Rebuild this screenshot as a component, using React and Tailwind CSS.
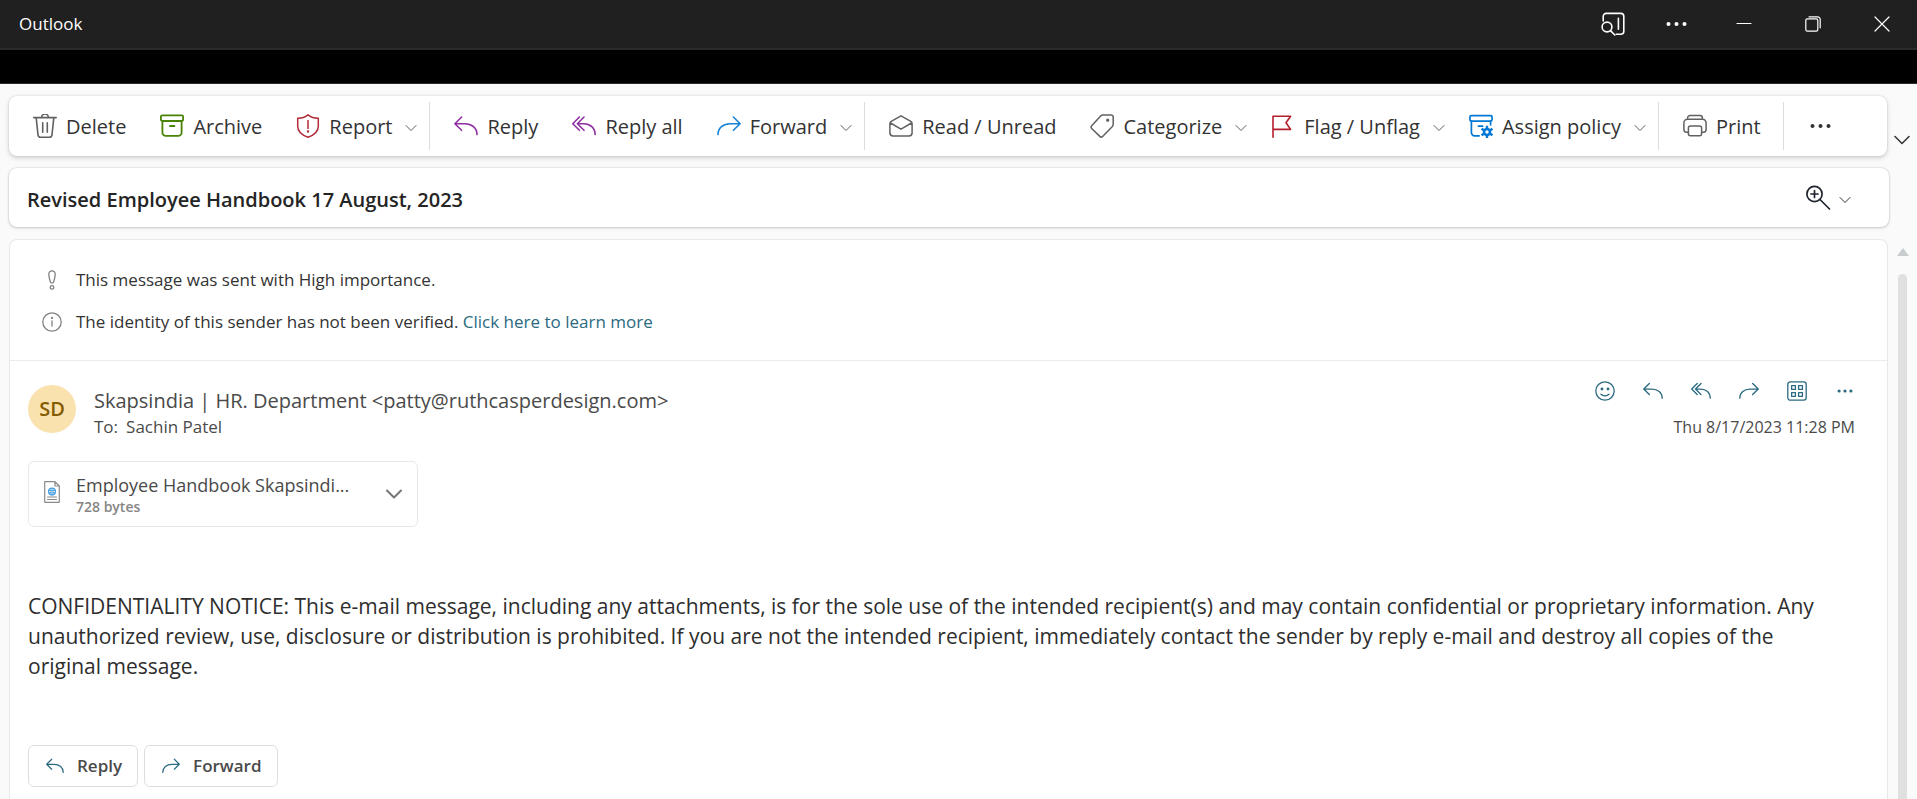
function Svg({ w = 24, h = 24, sw = 1.4, className = "", children }) {
  return (
    <svg
      width={w}
      height={h}
      viewBox={`0 0 ${w} ${h}`}
      fill="none"
      stroke="currentColor"
      strokeWidth={sw}
      strokeLinecap="round"
      strokeLinejoin="round"
      aria-hidden="true"
      className={`shrink-0 ${className}`}
    >
      {children}
    </svg>
  );
}

const DeleteIcon = () => (
  <Svg sw={1.6} className="text-[#616161]">
    <path d="M.8 3.6h22.4M8.6 3.4a3.4 3.4 0 0 1 6.8 0M3.2 3.8l1.8 17c.2 1.4 1.1 2.4 2.5 2.4h9c1.4 0 2.3-1 2.5-2.4l1.8-17M9.7 8.8v9.4M14.3 8.8v9.4" />
  </Svg>
);

const ArchiveIcon = () => (
  <Svg sw={1.8} className="text-[#498205]">
    <rect x=".9" y="1.4" width="22.2" height="5.6" rx="1.4" />
    <path d="M2.4 7v11.4a3.4 3.4 0 0 0 3.400 3.400h12.400a3.400 3.400 0 0 0 3.400-3.400V7M10 12h4.400" />
  </Svg>
);

const ShieldIcon = () => (
  <Svg sw={1.5} className="text-[#b02a37]">
    <path d="M12 .9c2.600 2.200 6 3.400 10.300 3.400v8c0 5-3.700 8.700-10.300 10.900C5.400 21 1.700 17.300 1.700 12.300v-8C6 4.300 9.400 3.100 12 .9zM12 6.600v7.800" />
    <circle cx="12" cy="17.600" r=".5" fill="currentColor" />
  </Svg>
);

const Arrow = ({ size = 24, className = "", d }) => (
  <svg
    width={size}
    height={size}
    viewBox="0 0 24 24"
    fill="none"
    stroke="currentColor"
    strokeWidth="1.6"
    strokeLinecap="round"
    strokeLinejoin="round"
    aria-hidden="true"
    className={`shrink-0 ${className}`}
  >
    <path d={d} />
  </svg>
);

const ReplyIcon = (props) => <Arrow {...props} d="M7.600 3L.9 9.700l6.700 6.600M1.200 9.700h9.600c7 0 12.200 4.300 12.200 10.900" />;

const ReplyAllIcon = (props) => (
  <Arrow {...props} d="M7.400 3L.8 9.700l6.600 6.600M12 3L5.400 9.700l6.600 6.600M5.600 9.700h6c6.600 0 11.500 4.300 11.500 10.900" />
);

const ForwardIcon = (props) => <Arrow {...props} d="M16.400 3l6.700 6.700-6.700 6.600M22.800 9.700h-9.600C6.200 9.700 1 14 1 20.600" />;

const MailReadIcon = () => (
  <Svg sw={1.5} className="text-[#616161]">
    <path d="M.9 9.600c0-1 .4-1.700 1.300-2.200L12 1.800l9.800 5.600c.9.500 1.300 1.200 1.300 2.200v9.200a3.200 3.200 0 0 1-3.200 3.200H4.100a3.200 3.200 0 0 1-3.200-3.200zM1.500 9L12 15.200 22.500 9" />
  </Svg>
);

const TagIcon = () => (
  <Svg sw={1.5} className="text-[#616161]">
    <path d="M13 .9h8a2.200 2.200 0 0 1 2.200 2.200v7.200c0 .8-.3 1.500-.8 2.100l-9.800 10c-.8.800-2 .8-2.800 0l-8.100-7.900c-.8-.8-.8-2 0-2.800L10.900 1.800c.6-.6 1.300-.9 2.100-.9z" />
    <circle cx="17.700" cy="6.200" r=".9" fill="currentColor" />
  </Svg>
);

const FlagIcon = () => (
  <Svg className="text-[#b3202c]" sw={1.600}>
    <path d="M2 23.200V2.200h17.600l-4.600 6.600 4.600 6.600H2" />
  </Svg>
);

const PolicyIcon = () => (
  <Svg sw={1.700} className="text-[#0078d4]">
    <rect x=".9" y="1.600" width="22.200" height="5.600" rx="1.600" />
    <path d="M2.400 7.200v11.400a3.200 3.200 0 0 0 3.200 3.200h4.600M21.600 7.200v3.600M9.400 12.200h4.200" />
    <circle cx="18" cy="18" r="3" strokeWidth="2.600" />
    <path strokeWidth="2.400" strokeLinecap="butt" d="M18 14.500v-2.700M18 21.500v2.500M21 16.300l2.500-1.500M15 19.700l-2.500 1.500M21 19.700l2.500 1.500M15 16.300l-2.500-1.500" />
  </Svg>
);

const PrinterIcon = () => (
  <Svg sw={1.5} className="text-[#616161]">
    <path d="M4.600 5.200V3.900a2.400 2.400 0 0 1 2.400-2.400h10a2.400 2.400 0 0 1 2.400 2.400v1.300M5.400 18.200H3.600A2.700 2.700 0 0 1 .9 15.500V8.700a3.500 3.500 0 0 1 3.500-3.500h15.200a3.500 3.500 0 0 1 3.500 3.500v6.800a2.700 2.700 0 0 1-2.700 2.700h-1.800" />
    <rect x="5.400" y="12" width="13.200" height="9.800" rx="2" />
  </Svg>
);

const Dots = ({ w = 20, r = 1.7, className = "" }) => (
  <svg width={w} height="20" viewBox={`0 0 ${w} 20`} fill="currentColor" aria-hidden="true" className={`shrink-0 ${className}`}>
    <circle cx={r + 0.5} cy="10" r={r} />
    <circle cx={w / 2} cy="10" r={r} />
    <circle cx={w - r - 0.5} cy="10" r={r} />
  </svg>
);

const Chevron = ({ className = "" }) => (
  <Svg w={12} h={8} sw={1} className={className}>
    <path d="M1 1.500l5 5 5-5" />
  </Svg>
);

const BigChevron = ({ sw = 1.5, className = "" }) => (
  <Svg w={16} h={10} sw={sw} className={className}>
    <path d="M1 1.500L8 8.500l7-7" />
  </Svg>
);

function Tool({ icon, label, menu }) {
  return (
    <button type="button" className={`flex h-12 items-center gap-[9px] pl-3 whitespace-nowrap ${menu ? "pr-3" : "pr-[22px]"}`}>
      {icon}
      <span className="pt-0.5">{label}</span>
      {menu && <Chevron className="mt-1 ml-1 text-[#5c5c5c]" />}
    </button>
  );
}

function Group({ children }) {
  return <div className="flex h-12 items-center border-r border-[#dcdcdc] pl-3 first:pl-0">{children}</div>;
}

function TitleBar() {
  return (
    <header className="flex h-[50px] items-center border-b-2 border-[#2b2b2b] bg-[#202020] pr-[27px] pl-[19px] text-white">
      <h1 className="flex-1 text-[17px] leading-6">Outlook</h1>
      <div className="flex items-center">
        <button type="button" aria-label="Search pane" className="mr-[41px]">
          <Svg sw={1.600}>
            <path d="M2.200 9V4.400a3 3 0 0 1 3-3h14.600a3 3 0 0 1 3 3v14.800a3 3 0 0 1-3 3h-4.600M17.400 6.200v11" />
            <circle cx="6" cy="15" r="4.900" />
            <path d="M9.500 18.600l4.300 4.400" />
          </Svg>
        </button>
        <button type="button" aria-label="More" className="mr-[49px]">
          <Dots w={21} r={2} />
        </button>
        <button type="button" aria-label="Minimize" className="mr-[53px]">
          <Svg w={16} h={16} sw={1.200}>
            <path d="M1 7.500h14" />
          </Svg>
        </button>
        <button type="button" aria-label="Restore" className="mr-[53px]">
          <Svg w={16} h={16} sw={1.200}>
            <rect x=".8" y="2.800" width="12" height="12.400" rx="1.600" />
            <path d="M4 .8h8.600a2.600 2.600 0 0 1 2.600 2.600v8.400" />
          </Svg>
        </button>
        <button type="button" aria-label="Close">
          <Svg w={16} h={16} sw={1.200}>
            <path d="M1 1l14 14M15 1L1 15" />
          </Svg>
        </button>
      </div>
    </header>
  );
}

function Toolbar() {
  return (
    <div className="flex">
      <nav aria-label="Message commands" className="flex h-[60px] flex-1 items-center rounded-lg bg-white pl-3 text-xl text-[#333333] shadow-[0_0_2px_rgba(0,0,0,0.16),0_2px_5px_rgba(0,0,0,0.16)]">
        <Group>
          <Tool icon={<DeleteIcon />} label="Delete" />
          <Tool icon={<ArchiveIcon />} label="Archive" />
          <Tool icon={<ShieldIcon />} label="Report" menu />
        </Group>
        <Group>
          <Tool icon={<ReplyIcon className="text-[#8f2fa3]" />} label="Reply" />
          <Tool icon={<ReplyAllIcon className="text-[#8f2fa3]" />} label="Reply all" />
          <Tool icon={<ForwardIcon className="text-[#1683d8]" />} label="Forward" menu />
        </Group>
        <Group>
          <Tool icon={<MailReadIcon />} label="Read / Unread" />
          <Tool icon={<TagIcon />} label="Categorize" menu />
          <Tool icon={<FlagIcon />} label="Flag / Unflag" menu />
          <Tool icon={<PolicyIcon />} label="Assign policy" menu />
        </Group>
        <Group>
          <Tool icon={<PrinterIcon />} label="Print" />
        </Group>
        <button type="button" aria-label="More commands" className="pl-[26px]">
          <Dots w={21} r={2} />
        </button>
      </nav>
      <button type="button" aria-label="Ribbon options" className="flex w-[30px] items-center justify-center pt-7 text-[#333333]">
        <BigChevron />
      </button>
    </div>
  );
}

function Subject() {
  return (
    <div className="mt-3 mr-7 flex h-[59px] items-center rounded-lg bg-white pr-[38px] pl-[18px] shadow-[0_0_2px_rgba(0,0,0,0.2),0_1px_3px_rgba(0,0,0,0.16)]">
      <h2 className="flex-1 pt-1 text-xl font-semibold text-[#242424]">Revised Employee Handbook 17 August, 2023</h2>
      <button type="button" aria-label="Zoom" className="flex items-center gap-2 text-[#1f2430]">
        <Svg w={26} h={26} sw={1.700}>
          <circle cx="9.500" cy="9" r="7.600" />
          <path d="M15 14.500l9.500 9.500M9.500 5.500v7M6 9h7" />
        </Svg>
        <Chevron className="mt-1 text-[#333333]" />
      </button>
    </div>
  );
}

function Notices() {
  return (
    <div className="border-b border-[#ebebeb] px-8 pt-[19px] pb-[17px] text-[17px] text-[#333333]">
      <p className="flex h-[42px] items-center gap-3.5">
        <Svg w={20} h={20} sw={1.300} className="text-[#808080]">
          <path d="M10 .8c2 0 3.400 1.500 3.200 3.700-.2 2.900-.8 5.300-1.500 7.200-.7 1.800-2.700 1.800-3.400 0-.7-1.900-1.300-4.300-1.500-7.200C6.600 2.300 8 .8 10 .8z" />
          <circle cx="10" cy="17.400" r="1.800" />
        </Svg>
        This message was sent with High importance.
      </p>
      <p className="flex h-[42px] items-center gap-3.5">
        <Svg w={20} h={20} sw={1.300} className="text-[#808080]">
          <circle cx="10" cy="10" r="9.200" />
          <path d="M10 9v5" />
          <circle cx="10" cy="6" r=".5" fill="currentColor" />
        </Svg>
        <span>
          The identity of this sender has not been verified.{" "}
          <a href="#learn-more" className="text-[#2b6a80]">
            Click here to learn more
          </a>
        </span>
      </p>
    </div>
  );
}

function MessageHeader() {
  return (
    <div className="flex pr-3.5">
      <div className="mt-1 flex size-12 items-center justify-center rounded-full bg-[#f9e2ae] text-xl font-semibold text-[#835b00]">SD</div>
      <div className="ml-[18px] flex-1 pt-1.5 text-[#4a4a4a]">
        <p className="text-xl leading-7">Skapsindia | HR. Department &lt;patty@ruthcasperdesign.com&gt;</p>
        <p className="flex gap-2 text-[17px] leading-6">
          <span>To:</span>
          <span>Sachin Patel</span>
        </p>
      </div>
      <div className="flex flex-col items-end">
        <div className="flex h-5 items-center gap-7 text-[#2b6a80]">
          <button type="button" aria-label="React">
            <Svg w={20} h={20} sw={1.300}>
              <circle cx="10" cy="10" r="9.200" />
              <path d="M6 13.300c2.200 2 5.800 2 8 0" />
              <circle cx="7" cy="8" r=".8" fill="currentColor" />
              <circle cx="13" cy="8" r=".8" fill="currentColor" />
            </Svg>
          </button>
          <button type="button" aria-label="Reply">
            <ReplyIcon size={20} />
          </button>
          <button type="button" aria-label="Reply all">
            <ReplyAllIcon size={20} />
          </button>
          <button type="button" aria-label="Forward">
            <ForwardIcon size={20} />
          </button>
          <button type="button" aria-label="Apps">
            <Svg w={20} h={20} sw={1.300}>
              <rect x=".8" y=".8" width="18.400" height="18.400" rx="2.600" />
              <rect x="4.600" y="4.600" width="3.800" height="3.800" />
              <rect x="11.600" y="4.600" width="3.800" height="3.800" />
              <rect x="4.600" y="11.600" width="3.800" height="3.800" />
              <rect x="11.600" y="11.600" width="3.800" height="3.800" />
            </Svg>
          </button>
          <button type="button" aria-label="More actions">
            <Dots w={16} r={1.600} className="mx-0.5" />
          </button>
        </div>
        <time className="mt-3.5 text-base leading-6 text-[#4a4a4a]">Thu 8/17/2023 11:28 PM</time>
      </div>
    </div>
  );
}

function Attachment() {
  return (
    <div className="mt-[22px] flex h-[66px] w-[390px] items-center rounded-md border border-[#e8e8e8] px-[15px]">
      <Svg w={16} h={22} sw={1.200} className="mb-1 text-[#8a8a8a]">
        <path d="M.7 .7h10.300l4.300 4.300v16.300H.7zM11 .7V5h4.300M3.500 16h9M3.500 18.500h9" />
        <g stroke="#4aa0e0" strokeWidth="1.300">
          <circle cx="8" cy="10.600" r="3.400" />
          <path d="M4.600 9.500h6.800M4.600 11.700h6.800M7 7.500v6.200M9 7.500v6.200" strokeWidth=".9" />
        </g>
      </Svg>
      <div className="ml-4 flex-1 pt-0.5">
        <p className="text-lg leading-6 text-[#4a4a4a]">Employee Handbook Skapsindi...</p>
        <p className="text-sm leading-5 font-semibold text-[#858585]">728 bytes</p>
      </div>
      <button type="button" aria-label="Attachment options">
        <BigChevron sw={2} className="text-[#757575]" />
      </button>
    </div>
  );
}

function ActionButton({ icon, label }) {
  return (
    <button type="button" className="flex h-[42px] items-center gap-[13px] rounded-md border border-[#dedede] pr-[15px] pl-[17px] text-[17px] font-semibold text-[#4a4a4a]">
      {icon}
      {label}
    </button>
  );
}

export default function App() {
  return (
    <div className="flex min-h-screen flex-col bg-[#fafafa] font-['Open_Sans','Noto_Sans',sans-serif]">
      <TitleBar />
      <div className="h-[34px] border-b border-[#2b2b2b] bg-black" />
      <main className="flex flex-1 flex-col pt-3 pl-[9px]">
        <Toolbar />
        <Subject />
        <div className="mt-3 flex flex-1">
          <article className="flex-1 rounded-t-lg border border-b-0 border-[#e8e8e8] bg-white">
            <Notices />
            <div className="px-[18px] pt-5 pb-3">
              <MessageHeader />
              <Attachment />
              <p className="mt-16 pr-6 text-[21px] leading-[30px] text-[#2e2e2e]">
                CONFIDENTIALITY NOTICE: This e-mail message, including any attachments, is for the sole use of the intended recipient(s) and may contain confidential or proprietary information. Any unauthorized review, use, disclosure or distribution is prohibited. If you are not the intended recipient, immediately contact the sender by reply e-mail and destroy all copies of the original message.
              </p>
              <div className="mt-16 flex gap-1.5">
                <ActionButton icon={<ReplyIcon size={18} className="text-[#2b6a80]" />} label="Reply" />
                <ActionButton icon={<ForwardIcon size={18} className="text-[#2b6a80]" />} label="Forward" />
              </div>
            </div>
          </article>
          <div className="flex w-[29px] flex-col items-center pt-[9px]" aria-hidden="true">
            <svg width="12" height="8" viewBox="0 0 12 8" fill="#c8cccf">
              <path d="M6 0L12 8H0z" />
            </svg>
            <div className="mt-[18px] w-[9px] flex-1 rounded-t-full bg-[#e0e0e0]" />
          </div>
        </div>
      </main>
    </div>
  );
}
